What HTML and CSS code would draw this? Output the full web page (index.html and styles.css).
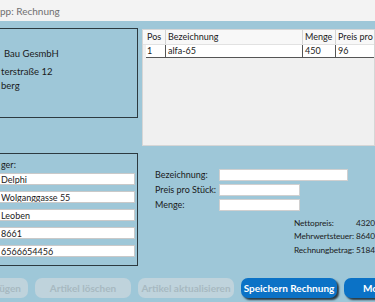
FILE: index.html
```html
<!DOCTYPE html>
<html lang="de">
<head>
    <meta charset="UTF-8">
    <meta name="viewport" content="width=device-width, initial-scale=1.0">
    <title>App: Rechnung</title>
    <link rel="stylesheet" href="styles.css">
</head>
<body>
    <header class="titlebar">
        <span class="title">pp: Rechnung</span>
    </header>
    <main class="window">
        <div class="row-top">
            <section class="group group-top">
                <p class="line line-first">Bau GesmbH</p>
                <p class="line">terstraße 12</p>
                <p class="line line-last">berg</p>
            </section>
            <section class="grid">
                <div class="grid-row grid-head">
                    <div class="cell cell-pos">Pos</div>
                    <div class="cell">Bezeichnung</div>
                    <div class="cell">Menge</div>
                    <div class="cell">Preis pro Stück</div>
                </div>
                <div class="grid-row grid-data">
                    <div class="cell cell-pos">1</div>
                    <div class="cell">alfa-65</div>
                    <div class="cell">450</div>
                    <div class="cell">96</div>
                </div>
            </section>
        </div>
        <div class="row-mid">
            <section class="group group-bottom">
                <p class="group-label">ger:</p>
                <input class="field" type="text" value="Delphi">
                <input class="field" type="text" value="Wolganggasse 55">
                <input class="field" type="text" value="Leoben">
                <input class="field" type="text" value="8661">
                <input class="field" type="text" value="6566654456">
            </section>
            <section class="form">
                <div class="form-grid">
                    <label>Bezeichnung:</label>
                    <input class="input input-wide" type="text">
                    <label>Preis pro Stück:</label>
                    <input class="input" type="text">
                    <label>Menge:</label>
                    <input class="input" type="text">
                </div>
                <div class="totals">
                    <span>Nettopreis:</span><span>4320</span>
                    <span>Mehrwertsteuer:</span><span>8640</span>
                    <span>Rechnungbetrag:</span><span>5184</span>
                </div>
            </section>
        </div>
        <div class="buttons">
            <button class="btn" disabled>Artikel hinzufügen</button>
            <button class="btn" disabled>Artikel löschen</button>
            <button class="btn" disabled>Artikel aktualisieren</button>
            <button class="btn btn-primary">Speichern Rechnung</button>
            <button class="btn btn-primary btn-more">Modus</button>
        </div>
    </main>
</body>
</html>
```

FILE: styles.css
```css
body {
    margin: 0;
    width: 375px;
    height: 302px;
    overflow: hidden;
    background-color: #9ec7d8;
    font-family: Lato, "Open Sans", sans-serif;
    font-size: 9px;
    color: #1b1b1b;
}
.titlebar {
    height: 21px;
    background-color: #f3f3f3;
    display: flex;
    align-items: center;
}
.title {
    margin-left: 0;
    font-size: 10px;
    color: #707070;
}
.window {
    display: flex;
    flex-direction: column;
}
.row-top {
    display: flex;
    margin-top: 7px;
}
.group {
    flex: none;
    box-sizing: border-box;
    width: 151px;
    margin-left: -13px;
    border: 1px solid #2c3a40;
}
.group-top {
    height: 90px;
    padding: 18px 0 0 13px;
}
.line {
    margin: 0 0 5px 0;
    height: 13px;
    line-height: 13px;
    font-size: 9.5px;
    white-space: nowrap;
}
.line-first {
    margin-left: 3px;
}
.line-last {
    margin-top: -4px;
}
.grid {
    box-sizing: border-box;
    flex: 1;
    height: 117px;
    margin: 1px 0 0 4px;
    background-color: #f0f0f0;
    border: 1px solid #d6d6d6;
    overflow: hidden;
}
.grid-row {
    display: grid;
    grid-template-columns: 23px 137px 33px 80px;
    white-space: nowrap;
}
.grid-head {
    height: 14px;
    line-height: 14px;
    background-color: #f8f8f8;
    border-bottom: 1px solid #e2e2e2;
}
.grid-head .cell {
    border-right: 1px solid #d4d4d4;
}
.grid-data {
    height: 12px;
    line-height: 12px;
    background-color: #fff;
    border-bottom: 1px solid #555;
    margin-left: 3px;
    grid-template-columns: 20px 137px 33px 80px;
}
.grid-data .cell {
    border-right: 1px solid #555;
}
.cell {
    padding-left: 2px;
    overflow: hidden;
}
.cell-pos {
    padding-left: 4px;
}
.grid-data .cell-pos {
    padding-left: 1px;
}
.row-mid {
    display: flex;
    margin-top: 7px;
}
.group-bottom {
    height: 113px;
    display: flex;
    flex-direction: column;
    padding: 3px 2px 0 0;
}
.group-label {
    margin: 0 0 0 13px;
    height: 15px;
    line-height: 15px;
}
.field {
    box-sizing: border-box;
    height: 12px;
    margin: 0 0 6px 0;
    padding: 0 0 0 12px;
    border: 1px solid #c9c9c9;
    background: #fff;
    font-family: inherit;
    font-size: 9px;
    color: #1b1b1b;
    outline: none;
}
.group-bottom .field:first-of-type {
    margin-top: 1px;
}
.form {
    flex: none;
    margin: 16px 0 0 17px;
}
.form-grid {
    display: grid;
    grid-template-columns: 64px auto;
    grid-auto-rows: 15px;
    align-items: start;
}
.form-grid label {
    line-height: 12px;
}
.input {
    box-sizing: border-box;
    width: 81px;
    height: 12px;
    border: 1px solid #d0d0d0;
    background: #fff;
    padding: 0;
}
.input-wide {
    width: 129px;
}
.totals {
    display: grid;
    grid-template-columns: 62px auto;
    justify-content: start;
    grid-auto-rows: 13.5px;
    align-items: center;
    margin: 2px 0 0 139px;
    white-space: nowrap;
    font-size: 8.3px;
    letter-spacing: -0.1px;
}
.buttons {
    display: flex;
    gap: 7px;
    margin: 12px 0 0 -68px;
}
.btn {
    flex: none;
    width: 96px;
    height: 20px;
    padding: 0;
    border: none;
    border-radius: 7px;
    background-color: #bfd3dc;
    color: #a7b9c1;
    font-family: inherit;
    font-size: 10px;
    font-weight: bold;
    white-space: nowrap;
}
.btn-primary {
    background-color: #0b72c6;
    color: #fff;
    box-shadow: 2px 2px 2px #2a3a44;
}
.btn-more {
    text-align: left;
    padding-left: 19px;
}
```
